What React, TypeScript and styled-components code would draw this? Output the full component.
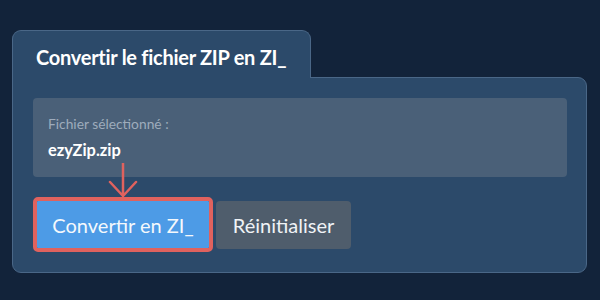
import React from "react"
import styled, { createGlobalStyle } from "styled-components"

const GlobalStyle = createGlobalStyle`
  html, body {
    margin: 0;
    padding: 0;
    background: #12233a;
    font-family: Lato, "Open Sans", sans-serif;
  }
`

const App = () => {
  return (
    <Page>
      <GlobalStyle />
      <Tab>Convertir le fichier ZIP en ZI_</Tab>
      <Panel>
        <FileBox>
          <Label>Fichier sélectionné :</Label>
          <FileName>ezyZip.zip</FileName>
        </FileBox>
        <ButtonRow>
          <Highlight>
            <Arrow width="30" height="35" viewBox="0 0 30 35">
              <path
                d="M15 0 V33 M2 19 L15 33 L28 19"
                fill="none"
                stroke="#e0625e"
                strokeWidth="2.5"
                strokeLinecap="round"
                strokeLinejoin="round"
              />
            </Arrow>
            <PrimaryButton>Convertir en ZI_</PrimaryButton>
          </Highlight>
          <SecondaryButton>Réinitialiser</SecondaryButton>
        </ButtonRow>
      </Panel>
    </Page>
  )
}

export default App

const Page = styled.div`
  width: 600px;
  height: 300px;
  box-sizing: border-box;
  padding: 30px 13px 0 12px;
  display: flex;
  flex-direction: column;
  align-items: flex-start;
`

const Tab = styled.div`
  box-sizing: border-box;
  height: 48px;
  padding: 14px 24px 0 23px;
  background: #2c4a6a;
  border: 1px solid #4a6787;
  border-bottom: none;
  border-radius: 9px 9px 0 0;
  color: #ffffff;
  font-weight: 700;
  font-size: 20px;
  line-height: 24px;
  letter-spacing: -0.27px;
  margin-bottom: -1px;
  position: relative;
  z-index: 1;
`

const Panel = styled.div`
  position: relative;
  box-sizing: border-box;
  width: 575px;
  height: 196px;
  background: #2c4a6a;
  border: 1px solid #4a6787;
  border-radius: 0 9px 9px 9px;
  padding: 20px 19px 0 20px;
  display: flex;
  flex-direction: column;
  gap: 20px;
`

const FileBox = styled.div`
  box-sizing: border-box;
  height: 79px;
  background: #4a6078;
  border-radius: 4px;
  padding: 17px 15px 0;
  display: flex;
  flex-direction: column;
  gap: 8px;
`

const Label = styled.div`
  color: #9eacbc;
  font-size: 13.8px;
  line-height: 17px;
`

const FileName = styled.div`
  color: #ffffff;
  font-weight: 700;
  font-size: 16.4px;
  line-height: 20px;
`

const ButtonRow = styled.div`
  display: flex;
  align-items: center;
  gap: 3px;
`

const Highlight = styled.div`
  position: relative;
  display: flex;
  border: 4px solid #e0625e;
  border-radius: 5px;
`

const Arrow = styled.svg`
  position: absolute;
  left: 50%;
  bottom: calc(100% + 3px);
  transform: translateX(-50%);
`

const PrimaryButton = styled.button`
  width: 172px;
  height: 47px;
  border: none;
  border-radius: 1px;
  background: #4d9be6;
  color: #f4f8fc;
  font-family: Lato, "Open Sans", sans-serif;
  font-size: 20px;
  padding: 0;
`

const SecondaryButton = styled.button`
  width: 135px;
  height: 48px;
  border: none;
  border-radius: 4px;
  background: #4f5d6c;
  color: #f0f3f6;
  font-family: Lato, "Open Sans", sans-serif;
  font-size: 20px;
  padding: 0;
`
